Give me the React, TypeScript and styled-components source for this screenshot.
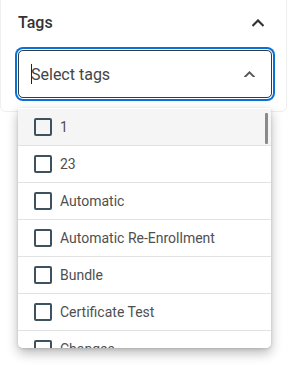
import React from "react";
import styled, { createGlobalStyle } from "styled-components";

const Global = createGlobalStyle`
  html, body { margin: 0; padding: 0; background: #fff; }
  body { font-family: Roboto, "Liberation Sans", sans-serif; }
`;

const Page = styled.div`
  position: relative;
  width: 300px;
  height: 365px;
  overflow: hidden;
`;

const Card = styled.section`
  width: 287px;
  box-sizing: border-box;
  margin-top: -6px;
  padding: 6px 14px 13px 16px;
  border: 1px solid #eeeeee;
  border-radius: 6px;
  background: #fff;
`;

const Header = styled.div`
  height: 44px;
  display: flex;
  align-items: center;
  justify-content: space-between;
  padding: 0 8px 0 1px;
`;

const Title = styled.h3`
  margin: 0;
  font-size: 16px;
  line-height: 20px;
  font-weight: 500;
  color: #333;
`;

const Select = styled.div`
  margin: 5px 0 0 1px;
  height: 48px;
  box-sizing: border-box;
  border: 1px solid #2e3e47;
  border-radius: 5px;
  box-shadow: 0 0 0 1px #fff, 0 0 0 3px #0a6fd6;
  display: flex;
  align-items: center;
  justify-content: space-between;
  padding: 0 16px 0 12px;
`;

const Placeholder = styled.span`
  display: flex;
  align-items: center;
  font-size: 16px;
  color: #444;
`;

const Caret = styled.span`
  width: 1px;
  height: 20px;
  background: #222;
  margin-right: -1px;
`;

const Menu = styled.div`
  position: absolute;
  top: 108px;
  left: 18px;
  width: 253px;
  height: 240px;
  background: #fff;
  border-radius: 0 0 5px 5px;
  box-shadow: 0 5px 12px rgba(0, 0, 0, 0.28), 0 1px 3px rgba(0, 0, 0, 0.12);
  overflow: hidden;
  padding-top: 1px;
  box-sizing: border-box;
`;

const Row = styled.div<{ $active?: boolean }>`
  height: 37px;
  box-sizing: border-box;
  border-bottom: 1px solid #e2e2e2;
  background: ${(p) => (p.$active ? "#f5f5f5" : "#fff")};
  display: flex;
  align-items: center;
  padding-left: 16px;
  gap: 8px;
`;

const Box = styled.span`
  width: 18px;
  height: 18px;
  box-sizing: border-box;
  border: 2px solid #3d525e;
  border-radius: 2px;
  flex: none;
`;

const Label = styled.span`
  font-size: 14px;
  color: #4f4f4f;
`;

const Thumb = styled.div`
  position: absolute;
  top: 5px;
  right: 3px;
  width: 3px;
  height: 31px;
  background: #8a8a8a;
  border-radius: 1px;
`;

const Chevron = ({ w, color, sw }: { w: number; color: string; sw: number }) => (
  <svg width={w} height={w * 0.6} viewBox="0 0 10 6" fill="none">
    <polyline
      points="1,5.2 5,1.2 9,5.2"
      stroke={color}
      strokeWidth={sw}
      strokeLinecap="square"
      strokeLinejoin="miter"
    />
  </svg>
);

const items = [
  "1",
  "23",
  "Automatic",
  "Automatic Re-Enrollment",
  "Bundle",
  "Certificate Test",
  "Changes",
];

export default function App() {
  return (
    <Page>
      <Global />
      <Card>
        <Header>
          <Title>Tags</Title>
          <Chevron w={12} color="#333" sw={1.8} />
        </Header>
        <Select>
          <Placeholder>
            <Caret />
            Select tags
          </Placeholder>
          <Chevron w={11} color="#555" sw={1.7} />
        </Select>
      </Card>
      <Menu>
        {items.map((t, i) => (
          <Row key={t} $active={i === 0}>
            <Box />
            <Label>{t}</Label>
          </Row>
        ))}
        <Thumb />
      </Menu>
    </Page>
  );
}
